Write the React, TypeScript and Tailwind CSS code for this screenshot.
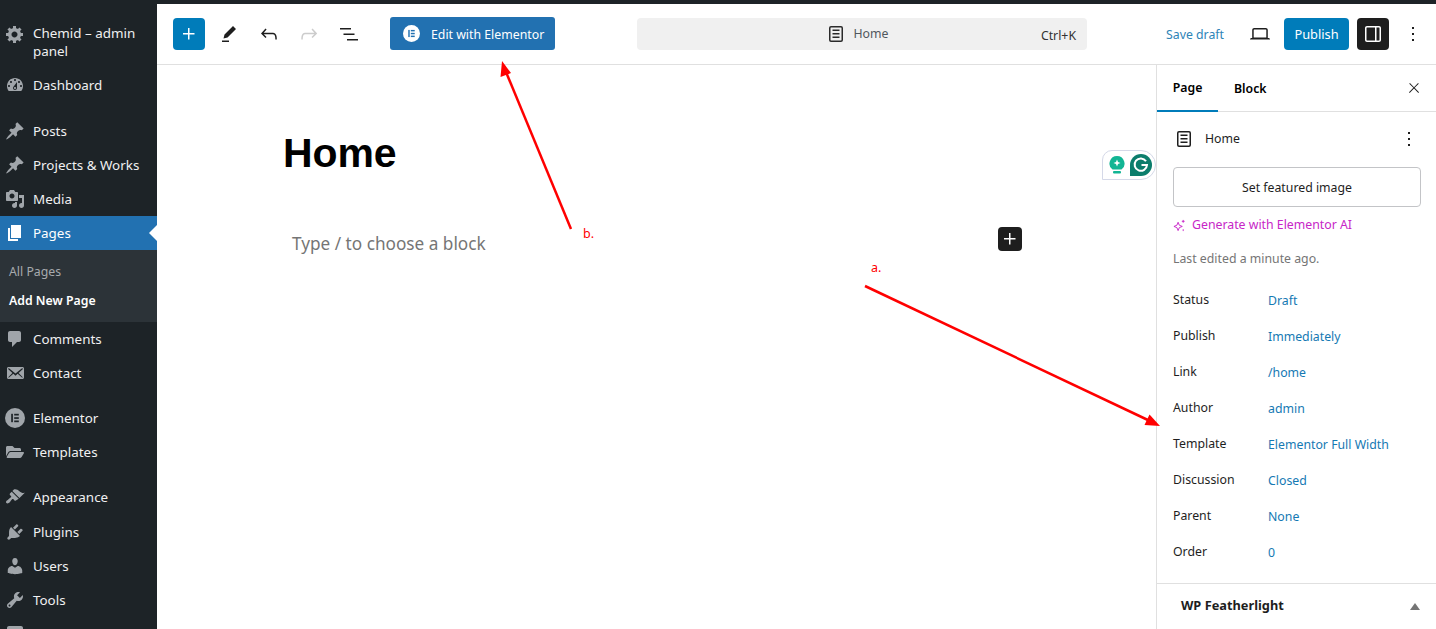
import type { ReactNode } from 'react';
import { FaFolderOpen } from 'react-icons/fa';

// dashicons used by the admin menu, on a 20 unit box
const dash = {
  settings: 'M18 12h-2.18c-.17.7-.44 1.35-.81 1.93l1.54 1.54-2.1 2.1-1.54-1.54c-.58.36-1.23.63-1.91.79V19H8v-2.18c-.68-.16-1.33-.43-1.91-.79l-1.54 1.54-2.12-2.12 1.54-1.54c-.36-.58-.63-1.23-.79-1.91H1V9.03h2.17c.16-.7.44-1.35.8-1.94L2.43 5.55l2.1-2.1 1.54 1.54c.58-.37 1.24-.64 1.93-.81V2h3v2.18c.68.16 1.33.43 1.91.79l1.54-1.54 2.12 2.12-1.54 1.54c.36.59.64 1.24.8 1.94H18V12zm-8.5 1.5c1.66 0 3-1.34 3-3s-1.34-3-3-3-3 1.34-3 3 1.34 3 3 3z',
  sliders: 'M18 16V4c0-1.1-.9-2-2-2H4c-1.1 0-2 .9-2 2v12c0 1.1.9 2 2 2h12c1.1 0 2-.9 2-2zM8 11h1c.55 0 1 .45 1 1s-.45 1-1 1H8v1.5c0 .28-.22.5-.5.5s-.5-.22-.5-.5V13H6c-.55 0-1-.45-1-1s.45-1 1-1h1V5.5c0-.28.22-.5.5-.5s.5.22.5.5V11zm5-2h-1c-.55 0-1-.45-1-1s.45-1 1-1h1V5.5c0-.28.22-.5.5-.5s.5.22.5.5V7h1c.55 0 1 .45 1 1s-.45 1-1 1h-1v5.5c0 .28-.22.5-.5.5s-.5-.22-.5-.5V9z',
  dashboard: 'M3.76 16h12.48c1.1-1.37 1.76-3.11 1.76-5 0-4.42-3.58-8-8-8s-8 3.58-8 8c0 1.89.66 3.63 1.76 5zM10 4c.55 0 1 .45 1 1s-.45 1-1 1-1-.45-1-1 .45-1 1-1zM6 6c.55 0 1 .45 1 1s-.45 1-1 1-1-.45-1-1 .45-1 1-1zm8 0c.55 0 1 .45 1 1s-.45 1-1 1-1-.45-1-1 .45-1 1-1zm-5.37 5.55L12 7v6c0 1.1-.9 2-2 2s-2-.9-2-2c0-.57.24-1.08.63-1.45zM4 10c.55 0 1 .45 1 1s-.45 1-1 1-1-.45-1-1 .45-1 1-1zm12 0c.55 0 1 .45 1 1s-.45 1-1 1-1-.45-1-1 .45-1 1-1zm-5 3c0-.55-.45-1-1-1s-1 .45-1 1 .45 1 1 1 1-.45 1-1z',
  pin: 'M10.44 3.02l1.82-1.82 6.36 6.35-1.83 1.82c-1.05-.68-2.48-.57-3.41.36l-.75.75c-.92.93-1.04 2.35-.35 3.41l-1.83 1.82-2.41-2.41-2.8 2.79c-.42.42-3.38 2.71-3.8 2.29s1.86-3.39 2.28-3.81l2.79-2.79L4.1 9.36l1.83-1.82c1.05.69 2.48.57 3.4-.36l.75-.75c.93-.92 1.05-2.35.36-3.41z',
  media: 'M13 11V4c0-.55-.45-1-1-1h-1.67L9 1H5L3.67 3H2c-.55 0-1 .45-1 1v7c0 .55.45 1 1 1h10c.55 0 1-.45 1-1zM7 4.5c1.38 0 2.5 1.12 2.5 2.5S8.38 9.5 7 9.5 4.5 8.38 4.5 7 5.62 4.5 7 4.5zM14 6h5v10.5c0 1.38-1.12 2.5-2.5 2.5S14 17.88 14 16.5s1.12-2.5 2.5-2.5c.17 0 .34.02.5.05V9h-3V6zm-4 8.05V13h2v3.5c0 1.38-1.12 2.5-2.5 2.5S7 17.88 7 16.5 8.12 14 9.5 14c.17 0 .34.02.5.05z',
  page: 'M6 15V2h10v13H6zm-1 1h8v2H3V5h2v11z',
  comments: 'M5 2h9c1.1 0 2 .9 2 2v7c0 1.1-.9 2-2 2h-2l-5 5v-5H5c-1.1 0-2-.9-2-2V4c0-1.1.9-2 2-2z',
  email: 'M19 14.5v-9c0-.83-.67-1.5-1.5-1.5H3.49c-.83 0-1.5.67-1.5 1.5v9c0 .83.67 1.5 1.5 1.5H17.5c.83 0 1.5-.67 1.5-1.5zm-1.31-9.11c.33.33.15.67-.03.84L13.6 9.95l3.9 4.06c.12.14.2.36.06.51-.13.16-.43.15-.56.05l-4.37-3.73-2.14 1.95-2.13-1.95-4.37 3.73c-.13.1-.43.11-.56-.05-.14-.15-.06-.37.06-.51l3.9-4.06-4.06-3.72c-.18-.17-.36-.51-.03-.84s.67-.17.95.07l6.24 5.04 6.25-5.04c.28-.24.62-.4.95-.07z',
  appearance: 'M14.48 11.06L7.41 3.99l1.5-1.5c.5-.56 2.3-.47 3.51.32 1.21.8 1.43 1.28 2.91 2.1 1.18.64 2.45 1.26 4.45.85zm-.71.71L6.7 4.7 4.93 6.47c-.39.39-.39 1.02 0 1.41l1.06 1.06c.39.39.39 1.03 0 1.42-.6.6-1.43 1.11-2.21 1.69-.35.26-.7.53-1.01.84C1.43 13.23.39 14.96 1.4 15.97c.99 1 2.73-.04 3.1-.42.32-.32.59-.65.85-1.01.58-.78 1.09-1.61 1.69-2.21.39-.39 1.02-.39 1.41 0l1.06 1.06c.39.39 1.02.39 1.41 0z',
  plugins: 'M13.11 4.36L9.87 7.6 8 5.73l3.24-3.24c.35-.34 1.05-.2 1.56.32.52.51.66 1.21.31 1.55zm-8 1.77l.91-1.12 9.01 9.01-1.19.84c-.71.71-2.63 1.16-3.82 1.16H6.14L4.9 17.26c-.59.59-1.54.59-2.12 0-.59-.58-.59-1.53 0-2.12l1.24-1.24v-3.88c0-1.13.4-3.19 1.09-3.89zm7.26 3.97l3.24-3.24c.34-.35 1.04-.21 1.55.31.52.51.66 1.21.31 1.55l-3.24 3.25z',
  users: 'M10 9.25c-2.27 0-2.73-3.44-2.73-3.44C7 4.02 7.82 2 9.97 2c2.16 0 2.98 2.02 2.71 3.81 0 0-.41 3.44-2.68 3.44zm0 2.57L12.72 10c2.39 0 4.52 2.33 4.52 4.53v2.49s-3.65 1.13-7.24 1.13c-3.65 0-7.24-1.13-7.24-1.13v-2.49c0-2.25 1.94-4.48 4.47-4.48z',
  tools: 'M16.68 9.77c-1.34 1.34-3.3 1.67-4.95.99l-5.41 6.52c-.99.99-2.59.99-3.58 0s-.99-2.59 0-3.57l6.52-5.42c-.68-1.65-.35-3.61.99-4.95 1.28-1.28 3.12-1.62 4.72-1.06l-2.89 2.89 2.82 2.82 2.86-2.87c.53 1.58.18 3.39-1.08 4.65zM3.81 16.21c.4.39 1.04.39 1.43 0 .4-.4.4-1.04 0-1.43-.39-.4-1.03-.4-1.43 0-.39.39-.39 1.03 0 1.43z',
};

// block editor icons, on a 24 unit box
const wp = {
  plus: 'M11 12.5V17.5H12.5V12.5H17.5V11H12.5V6H11V11H6V12.5H11Z',
  pencil: 'm19 7-3-3-8.5 8.5-1 4 4-1L19 7Zm-7 11.5H5V20h7v-1.5Z',
  undo: 'M18.3 11.7c-.6-.6-1.4-.9-2.3-.9H6.7l2.9-3.3-1.1-1-4.5 5L8.5 16l1-1-2.7-2.7H16c.5 0 .9.2 1.3.5 1 1 1 3.4 1 4.5v.3h1.5v-.2c0-1.5 0-4.3-1.5-5.7z',
  redo: 'M15.6 6.5l-1.1 1 2.9 3.3H8c-.9 0-1.7.3-2.3.9-1.4 1.5-1.4 4.2-1.4 5.6v.2h1.5v-.3c0-1.1 0-3.5 1-4.5.3-.3.7-.5 1.3-.5h9.2L14.5 15l1.1 1.1 4.6-4.6-4.6-5z',
  list: 'M3 6h11v1.5H3V6Zm3.5 5.5h11V13h-11v-1.5ZM21 17H10v1.5h11V17Z',
  doc: 'M15.5 7.5h-7V9h7V7.5Zm-7 3.5h7v1.5h-7V11Zm7 3.5h-7V16h7v-1.5ZM17 4H7a2 2 0 0 0-2 2v12a2 2 0 0 0 2 2h10a2 2 0 0 0 2-2V6a2 2 0 0 0-2-2Zm.5 14c0 .3-.2.5-.5.5H7c-.3 0-.5-.2-.5-.5V6c0-.3.2-.5.5-.5h10c.3 0 .5.2.5.5v12Z',
  laptop: 'M20.5 16h-.7V8c0-1.1-.9-2-2-2H6.2c-1.1 0-2 .9-2 2v8h-.7c-.8 0-1.5.7-1.5 1.5h20c0-.8-.7-1.5-1.5-1.5zM5.7 8c0-.3.2-.5.5-.5h11.6c.3 0 .5.2.5.5v7.6H5.7V8z',
  sidebar: 'M18 4H6c-1.1 0-2 .9-2 2v12c0 1.1.9 2 2 2h12c1.1 0 2-.9 2-2V6c0-1.1-.9-2-2-2zm-4 14.5H6c-.3 0-.5-.2-.5-.5V6c0-.3.2-.5.5-.5h8v13zm4.5-.5c0 .3-.2.5-.5.5h-2.5v-13H18c.3 0 .5.2.5.5v12z',
  more: 'M13 19h-2v-2h2v2zm0-6h-2v-2h2v2zm0-6h-2V5h2v2z',
  close: 'M13 11.8l6.1-6.3-1-1-6.1 6.2-6.1-6.2-1 1 6.1 6.3-6.5 6.7 1 1 6.5-6.6 6.5 6.6 1-1z',
};

function Dash({ d, className = 'text-[#a0a5aa]' }: { d: string; className?: string }) {
  return (
    <svg viewBox="0 0 20 20" className={`h-5 w-5 shrink-0 fill-current ${className}`}>
      <path d={d} />
    </svg>
  );
}

function Wp({ d, className = '' }: { d: string; className?: string }) {
  return (
    <svg viewBox="0 0 24 24" className={`h-6 w-6 shrink-0 fill-current ${className}`}>
      <path d={d} />
    </svg>
  );
}

function ElementorMark({ className, cut }: { className: string; cut: string }) {
  return (
    <svg viewBox="0 0 20 20" className={className}>
      <circle cx="10" cy="10" r="10" className="fill-current" />
      <g className={cut}>
        <rect x="6.2" y="5.8" width="1.7" height="8.4" />
        <rect x="9.2" y="5.8" width="4.6" height="1.7" />
        <rect x="9.2" y="9.2" width="4.6" height="1.7" />
        <rect x="9.2" y="12.5" width="4.6" height="1.7" />
      </g>
    </svg>
  );
}

function MenuRow({ icon, children, active }: { icon: ReactNode; children?: ReactNode; active?: boolean }) {
  return (
    <div className={`relative flex h-[34px] shrink-0 items-center gap-2 pl-[5px] ${active ? 'bg-[#2271b1] text-white' : 'text-[#f0f0f1]'}`}>
      {icon}
      <span>{children}</span>
      {active && <span className="absolute right-0 top-[9px] h-0 w-0 border-y-8 border-r-8 border-y-transparent border-r-white" />}
    </div>
  );
}

function AdminMenu() {
  return (
    <aside className="flex w-[157px] shrink-0 flex-col overflow-hidden bg-[#1d2327] pt-5 text-[13.4px] leading-[18px]">
      <div className="flex shrink-0 gap-2 pb-2 pl-[5px] text-[#f0f0f1]">
        <Dash d={dash.settings} />
        <span className="w-[115px]">Chemid – admin panel</span>
      </div>
      <MenuRow icon={<Dash d={dash.dashboard} />}>Dashboard</MenuRow>
      <div className="h-3 shrink-0" />
      <MenuRow icon={<Dash d={dash.pin} />}>Posts</MenuRow>
      <MenuRow icon={<Dash d={dash.pin} />}>Projects &amp; Works</MenuRow>
      <MenuRow icon={<Dash d={dash.media} />}>Media</MenuRow>
      <MenuRow active icon={<Dash d={dash.page} className="text-white" />}>Pages</MenuRow>
      <div className="flex h-[72px] shrink-0 flex-col gap-[11px] bg-[#2c3338] pl-[9px] pt-[13px] text-[12.3px]">
        <span className="text-[#a7aaad]">All Pages</span>
        <span className="font-semibold text-white">Add New Page</span>
      </div>
      <MenuRow icon={<Dash d={dash.comments} />}>Comments</MenuRow>
      <MenuRow icon={<Dash d={dash.email} />}>Contact</MenuRow>
      <div className="h-[11px] shrink-0" />
      <MenuRow icon={<ElementorMark className="h-5 w-5 shrink-0 text-[#a0a5aa]" cut="fill-[#1d2327]" />}>Elementor</MenuRow>
      <MenuRow icon={<span className="flex w-5 shrink-0 justify-center text-[18px] text-[#a0a5aa]"><FaFolderOpen /></span>}>Templates</MenuRow>
      <div className="h-[11px] shrink-0" />
      <MenuRow icon={<Dash d={dash.appearance} />}>Appearance</MenuRow>
      <div className="h-px shrink-0" />
      <MenuRow icon={<Dash d={dash.plugins} />}>Plugins</MenuRow>
      <MenuRow icon={<Dash d={dash.users} />}>Users</MenuRow>
      <MenuRow icon={<Dash d={dash.tools} />}>Tools</MenuRow>
      {/* next row is cut by the window, only the top of its icon shows */}
      <MenuRow icon={<Dash d={dash.sliders} />} />
    </aside>
  );
}

function TopBar() {
  return (
    <header className="flex h-[61px] shrink-0 items-center whitespace-nowrap border-b border-[#e0e0e0] pb-px pl-4 text-[13px]">
      <div className="flex h-8 w-8 shrink-0 items-center justify-center rounded-sm bg-[#007cba] text-white">
        <Wp d={wp.plus} />
      </div>
      <div className="ml-3 flex shrink-0 items-center gap-4 text-[#1e1e1e]">
        <Wp d={wp.pencil} />
        <Wp d={wp.undo} />
        <Wp d={wp.redo} className="text-[#cccccc]" />
        <Wp d={wp.list} />
      </div>
      <div className="ml-[29px] flex h-[33px] w-[165px] shrink-0 items-center rounded-[3px] bg-[#2271b1] pl-[13px] text-white">
        <ElementorMark className="h-[17px] w-[17px] shrink-0 text-white" cut="fill-[#2271b1]" />
        <span className="ml-[11px] mt-1 text-[12.3px]">Edit with Elementor</span>
      </div>
      <div className="relative ml-[82px] flex h-8 w-[450px] shrink-0 items-center justify-center gap-1 rounded-sm bg-[#f0f0f0] text-[12.3px] text-[#50575e]">
        <Wp d={wp.doc} className="text-[#2a2a2a]" />
        <span className="mr-3 ml-0.5 mt-0.5">Home</span>
        <span className="absolute right-[11px] top-[9px] text-[#333]">Ctrl+K</span>
      </div>
      <span className="ml-[79px] mt-1 w-[58px] shrink-0 text-[12.3px] text-[#2e84b7]">Save draft</span>
      <Wp d={wp.laptop} className="ml-6 text-[#1e1e1e]" />
      <div className="ml-3 flex h-8 w-[65px] shrink-0 items-center justify-center rounded-sm bg-[#007cba] text-[12.8px] text-white"><span className="mt-0.5">Publish</span></div>
      <div className="ml-2 flex h-8 w-8 shrink-0 items-center justify-center rounded-sm bg-[#1e1e1e] text-white">
        <Wp d={wp.sidebar} />
      </div>
      <Wp d={wp.more} className="ml-3 text-[#1e1e1e]" />
    </header>
  );
}

const settings: [string, string][] = [
  ['Status', 'Draft'],
  ['Publish', 'Immediately'],
  ['Link', '/home'],
  ['Author', 'admin'],
  ['Template', 'Elementor Full Width'],
  ['Discussion', 'Closed'],
  ['Parent', 'None'],
  ['Order', '0'],
];

function SettingsPanel() {
  return (
    <section className="flex w-[280px] shrink-0 flex-col border-l border-[#e0e0e0] text-[12.3px] text-[#1e1e1e]">
      <div className="flex h-[47px] shrink-0 items-center border-b border-[#e0e0e0] pr-[14px]">
        <div className="flex h-[47px] w-[61px] items-center justify-center border-b-2 border-[#007cba] pt-0.5 font-semibold text-black">Page</div>
        <span className="ml-4 pt-0.5 font-semibold text-black">Block</span>
        <Wp d={wp.close} className="ml-auto h-[16px] w-[16px] text-[#1e1e1e]" />
      </div>
      <div className="flex items-center pl-[15px] pr-[3px] pt-[15px]">
        <Wp d={wp.doc} className="text-[#1e1e1e]" />
        <span className="ml-[9px]">Home</span>
        <Wp d={wp.more} className="ml-auto mr-3 text-[#1e1e1e]" />
      </div>
      <div className="mx-4 mt-4 flex h-10 w-[248px] shrink-0 items-center justify-center rounded-sm border border-[#c3c4c7] pt-0.5">Set featured image</div>
      <div className="ml-4 mt-[9px] flex h-[18px] items-center gap-1.5 text-[#c725c7]">
        <svg viewBox="0 0 14 14" className="h-[13px] w-[13px] fill-none stroke-current">
          <path d="M5.5 3.5 L6.8 6.7 L10 8 L6.8 9.3 L5.5 12.5 L4.2 9.3 L1 8 L4.2 6.7 Z" />
          <path d="M11 1v3M9.5 2.5h3M11 11v2" />
        </svg>
        <span>Generate with Elementor AI</span>
      </div>
      <div className="ml-4 mt-4 leading-[18px] text-[#757575]">Last edited a minute ago.</div>
      <div className="mt-6 flex flex-col gap-[18px] pb-[21px] pl-4">
        {settings.map(([label, value]) => (
          <div key={label} className="flex h-[18px] items-center">
            <span className="-mt-0.5 w-[95px]">{label}</span>
            <span className="text-[#1579b3]">{value}</span>
          </div>
        ))}
      </div>
      <div className="flex flex-1 items-start border-t border-[#e0e0e0] pl-6 pr-4 pt-3">
        <span className="text-[12.8px] font-bold">WP Featherlight</span>
        <span className="ml-auto mt-[7px] h-0 w-0 border-x-[5px] border-b-[7px] border-x-transparent border-b-[#757575]" />
      </div>
    </section>
  );
}

function GrammarlyBadge() {
  return (
    <div className="absolute right-0 top-[85px] flex h-[30px] w-[54px] items-center rounded-r-[15px] rounded-tl-[10px] border border-[#d5d9e8] bg-white pl-[6px]">
      <svg viewBox="0 0 16 18" className="h-[18px] w-4 shrink-0">
        <path d="M8 0a7.5 7.5 0 0 0-4.5 13.5h9A7.5 7.5 0 0 0 8 0Z" fill="#12b594" />
        <path d="M8 3.5 L9 6 L11.5 7 L9 8 L8 10.5 L7 8 L4.5 7 L7 6 Z" fill="#fff" />
        <rect x="4" y="15" width="8" height="2.5" rx="1" fill="#12b594" />
      </svg>
      <svg viewBox="0 0 22 22" className="ml-[5px] h-[22px] w-[22px] shrink-0">
        <path d="M11 0a11 11 0 0 1 0 22H0V11A11 11 0 0 1 11 0Z" fill="#0b7d6c" />
        <path d="M16 7.2A6.2 6.2 0 1 0 17 11H11.5" fill="none" stroke="#fff" strokeWidth="2" />
      </svg>
    </div>
  );
}

function Canvas() {
  return (
    <main className="relative min-w-0 flex-1">
      <GrammarlyBadge />
      <h1 className="ml-[126px] mt-[61px] font-['Liberation_Sans',sans-serif] text-[41px] font-bold leading-[54px] tracking-[-0.1px] text-black">Home</h1>
      <div className="ml-[135px] mt-[47px] flex w-[730px] items-start justify-between">
        <span className="mt-[5px] text-[17.2px] leading-6 text-[#757575]">Type / to choose a block</span>
        <div className="flex h-6 w-6 items-center justify-center rounded-sm bg-[#1e1e1e] text-white">
          <Wp d={wp.plus} />
        </div>
      </div>
    </main>
  );
}

function Annotations() {
  return (
    <>
      <svg viewBox="0 0 1436 629" className="pointer-events-none absolute inset-0 h-[629px] w-[1436px]">
        <line x1="865" y1="286" x2="1150" y2="421" stroke="#ff0000" strokeWidth="2.5" />
        <path d="M1160 426 L1144.5 425 L1149.5 414.5 Z" fill="#ff0000" />
        <line x1="571" y1="229" x2="506" y2="72" stroke="#ff0000" strokeWidth="2.5" />
        <path d="M502 61 L511 73 L500.5 77 Z" fill="#ff0000" />
      </svg>
      <span className="absolute left-[871px] top-[259px] text-[12.5px] leading-[18px] text-[#ff0000]">a.</span>
      <span className="absolute left-[583px] top-[225px] text-[12.5px] leading-[18px] text-[#ff0000]">b.</span>
    </>
  );
}

export default function App() {
  return (
    <div className="relative flex h-[629px] w-[1436px] flex-col overflow-hidden bg-white font-['Noto_Sans',sans-serif]">
      <div className="h-1 shrink-0 bg-[#1d2327]" />
      <div className="flex min-h-0 flex-1">
        <AdminMenu />
        <div className="flex min-w-0 flex-1 flex-col">
          <TopBar />
          <div className="flex min-h-0 flex-1">
            <Canvas />
            <SettingsPanel />
          </div>
        </div>
      </div>
      <Annotations />
    </div>
  );
}
